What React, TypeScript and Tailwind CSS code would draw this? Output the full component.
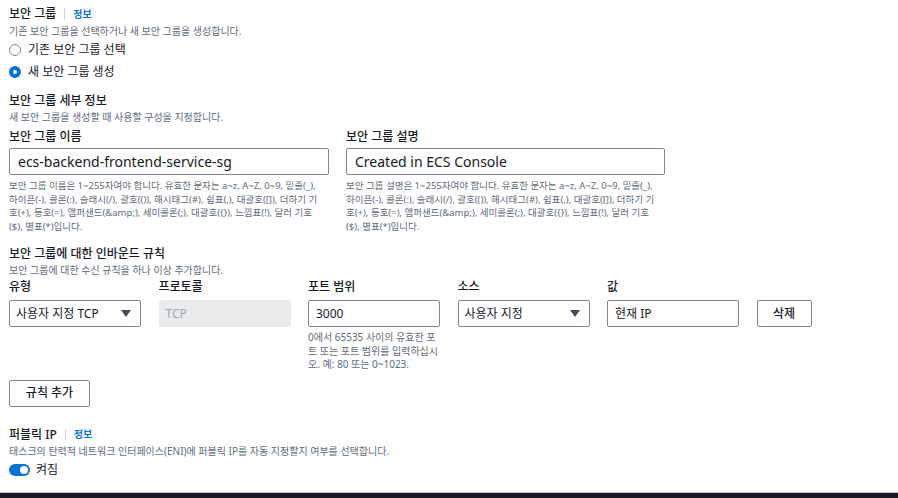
import React from 'react';

const font = { fontFamily: '"Noto Sans", "Noto Sans CJK KR", sans-serif' };

function Caret() {
    return (
        <svg width="10" height="7" viewBox="0 0 10 7" className="shrink-0">
            <path d="M0 0h10L5 7z" fill="#414d5c" />
        </svg>
    );
}

function Radio({ checked, label }: { checked?: boolean; label: string }) {
    return (
        <div className="flex items-center gap-[7px] h-[22px]">
            {checked ? (
                <span className="w-[12px] h-[12px] rounded-full border-[4px] border-[#0972d3] bg-white" />
            ) : (
                <span className="w-[12px] h-[12px] rounded-full border border-[#7d8998] bg-white" />
            )}
            <span className="text-[12px] text-[#16191f]">{label}</span>
        </div>
    );
}

function Heading({ title, info }: { title: string; info?: boolean }) {
    return (
        <div className="flex items-center h-[16px]">
            <span className="text-[12px] font-medium text-[#16191f]">{title}</span>
            {info && (
                <>
                    <span className="mx-[8px] w-px h-[12px] bg-[#d1d5db]" />
                    <span className="text-[10px] font-bold text-[#0972d3]">정보</span>
                </>
            )}
        </div>
    );
}

const rules =
    '보안 그룹 이름은 1~255자여야 합니다. 유효한 문자는 a~z, A~Z, 0~9, 밑줄(_), 하이픈(-), 콜론(:), 슬래시(/), 괄호(()), 해시태그(#), 쉼표(,), 대괄호([]), 더하기 기호(+), 등호(=), 앰퍼샌드(&amp;), 세미콜론(;), 대괄호({}), 느낌표(!), 달러 기호($), 별표(*)입니다.';

export default function App() {
    return (
        <div style={font} className="w-[898px] h-[498px] bg-white flex flex-col overflow-hidden">
            <div className="flex-1 px-[9px] pt-[6px]">
                <Heading title="보안 그룹" info />
                <p className="text-[10px] text-[#5f6b7a] mt-[2px] leading-[14px]">
                    기존 보안 그룹을 선택하거나 새 보안 그룹을 생성합니다.
                </p>
                <div className="mt-[1px]">
                    <Radio label="기존 보안 그룹 선택" />
                    <Radio checked label="새 보안 그룹 생성" />
                </div>

                <div className="mt-[10px]">
                    <Heading title="보안 그룹 세부 정보" />
                    <p className="text-[10px] text-[#5f6b7a] mt-[1px] leading-[14px]">
                        새 보안 그룹을 생성할 때 사용할 구성을 지정합니다.
                    </p>
                </div>

                <div className="grid grid-cols-[320px_319px] gap-x-[17px] mt-[4px]">
                    {[
                        { label: '보안 그룹 이름', value: 'ecs-backend-frontend-service-sg', help: rules },
                        {
                            label: '보안 그룹 설명',
                            value: 'Created in ECS Console',
                            help: rules.replace('보안 그룹 이름은', '보안 그룹 설명은'),
                        },
                    ].map((f) => (
                        <div key={f.label}>
                            <div className="text-[12px] font-medium text-[#16191f] h-[18px] leading-[18px]">{f.label}</div>
                            <div className="mt-[2px] h-[27px] border border-[#7d8998] rounded-[2px] flex items-center px-[8px] text-[14px] text-[#16191f]">
                                {f.value}
                            </div>
                            <p className="mt-[4px] text-[9.5px] leading-[13.5px] text-[#5f6b7a] pr-[4px]">{f.help}</p>
                        </div>
                    ))}
                </div>

                <div className="mt-[13px]">
                    <Heading title="보안 그룹에 대한 인바운드 규칙" />
                    <p className="text-[10px] text-[#5f6b7a] mt-[1px] leading-[14px]">
                        보안 그룹에 대한 수신 규칙을 하나 이상 추가합니다.
                    </p>
                </div>

                <div className="grid grid-cols-[132px_132px_132px_132px_132px_55px] gap-x-[17.5px] mt-[2px]">
                    <div>
                        <div className="text-[12px] font-medium text-[#16191f] h-[16px] leading-[16px]">유형</div>
                        <div className="mt-[5px] h-[27px] border border-[#7d8998] rounded-[2px] flex items-center justify-between pl-[6px] pr-[9px] text-[12px] text-[#16191f]">
                            사용자 지정 TCP
                            <Caret />
                        </div>
                    </div>
                    <div>
                        <div className="text-[12px] font-medium text-[#16191f] h-[16px] leading-[16px]">프로토콜</div>
                        <div className="mt-[5px] h-[27px] bg-[#e9ebed] rounded-[2px] flex items-center px-[7px] text-[12px] text-[#9ba7b6]">
                            TCP
                        </div>
                    </div>
                    <div>
                        <div className="text-[12px] font-medium text-[#16191f] h-[16px] leading-[16px]">포트 범위</div>
                        <div className="mt-[5px] h-[27px] border border-[#7d8998] rounded-[2px] flex items-center px-[7px] text-[12px] text-[#16191f]">
                            3000
                        </div>
                        <p className="mt-[4px] text-[10px] leading-[13.5px] text-[#5f6b7a] whitespace-nowrap">
                            0에서 65535 사이의 유효한 포
                            <br />
                            트 또는 포트 범위를 입력하십시
                            <br />
                            오. 예: 80 또는 0~1023.
                        </p>
                    </div>
                    <div>
                        <div className="text-[12px] font-medium text-[#16191f] h-[16px] leading-[16px]">소스</div>
                        <div className="mt-[5px] h-[27px] border border-[#7d8998] rounded-[2px] flex items-center justify-between pl-[6px] pr-[9px] text-[12px] text-[#16191f]">
                            사용자 지정
                            <Caret />
                        </div>
                    </div>
                    <div>
                        <div className="text-[12px] font-medium text-[#16191f] h-[16px] leading-[16px]">값</div>
                        <div className="mt-[5px] h-[27px] border border-[#7d8998] rounded-[2px] flex items-center px-[7px] text-[12px] text-[#16191f]">
                            현재 IP
                        </div>
                    </div>
                    <div className="pt-[21px]">
                        <div className="h-[27px] border border-[#7d8998] rounded-[2px] flex items-center justify-center text-[12px] font-medium text-[#16191f]">
                            삭제
                        </div>
                    </div>
                </div>

                <div className="mt-[8px] w-[81px] h-[27px] border border-[#7d8998] rounded-[2px] flex items-center justify-center text-[12px] font-medium text-[#16191f]">
                    규칙 추가
                </div>

                <div className="mt-[20px]">
                    <Heading title="퍼블릭 IP" info />
                    <p className="text-[10px] text-[#5f6b7a] mt-[1px] leading-[14px]">
                        태스크의 탄력적 네트워크 인터페이스(ENI)에 퍼블릭 IP를 자동 지정할지 여부를 선택합니다.
                    </p>
                    <div className="flex items-center gap-[6px] mt-[4px] h-[16px]">
                        <span className="w-[21px] h-[12px] rounded-full bg-[#0972d3] flex items-center justify-end pr-[2px]">
                            <span className="w-[8px] h-[8px] rounded-full bg-white" />
                        </span>
                        <span className="text-[12px] text-[#16191f]">켜짐</span>
                    </div>
                </div>
            </div>
            <div className="h-px bg-[#c6c6cd]" />
            <div className="h-[5px] bg-[#16191f]" />
        </div>
    );
}
